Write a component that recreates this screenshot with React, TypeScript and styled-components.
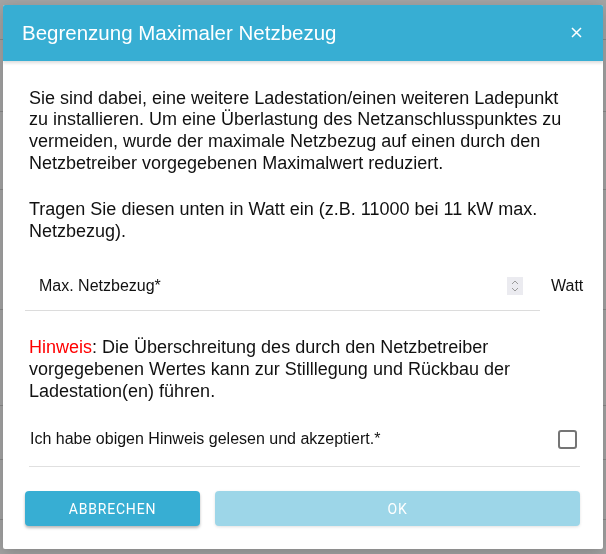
import React from "react";
import styled, { createGlobalStyle } from "styled-components";

const GlobalStyle = createGlobalStyle`
  html, body {
    margin: 0;
    padding: 0;
    height: 100%;
    background: #ffffff;
    font-family: "Liberation Sans", Arial, sans-serif;
  }
`;

const StyledPage = styled("div")`
  height: 554px;
  overflow: hidden;
`;
const StyledPageRow = styled("div")<{ $height: number }>`
  height: ${(p) => p.$height}px;
  border-bottom: 1px solid #d6d6d6;
  box-sizing: border-box;
`;

const StyledBackdrop = styled("div")`
  position: fixed;
  inset: 0;
  background: rgba(0, 0, 0, 0.36);
  display: flex;
  align-items: center;
  justify-content: center;
`;
const StyledDialog = styled("div")`
  width: 600px;
  background: #ffffff;
  display: flex;
  flex-direction: column;
  border-radius: 2px;
  overflow: hidden;
  box-shadow: 0 4px 16px rgba(0, 0, 0, 0.2);
`;
const StyledHeader = styled("div")`
  height: 56px;
  background-color: #37aed3;
  display: flex;
  align-items: center;
  justify-content: space-between;
  padding: 0 21px 0 19px;
  box-shadow: 0 2px 3px rgba(0, 0, 0, 0.14);
  position: relative;
  z-index: 1;
`;
const StyledTitle = styled("div")`
  color: #ffffff;
  font-size: 20.5px;
  font-weight: 400;
`;
const StyledClose = styled("button")`
  border: none;
  background: none;
  padding: 0;
  width: 12px;
  height: 12px;
  display: flex;
  align-items: center;
  justify-content: center;
  cursor: pointer;
`;
const StyledBody = styled("div")`
  padding: 27px 23px 23px 22px;
  display: flex;
  flex-direction: column;
`;
const StyledText = styled("p")<{ $top: number }>`
  margin: ${(p) => p.$top}px 0 0 0;
  padding: 0 6px 0 4px;
  font-size: 18px;
  line-height: 1.2;
  color: #111111;
`;
const StyledRed = styled("span")`
  color: #ff0000;
`;
const StyledInputRow = styled("div")`
  margin-top: 19px;
  display: flex;
  align-items: center;
  gap: 11px;
`;
const StyledField = styled("div")`
  flex: 1;
  height: 50px;
  box-sizing: border-box;
  border-bottom: 1px solid #dcdcdc;
  display: flex;
  align-items: center;
  padding: 0 17px 0 14px;
`;
const StyledFieldLabel = styled("span")`
  flex: 1;
  font-size: 16px;
  color: #111111;
`;
const StyledSpinner = styled("div")`
  width: 16px;
  height: 18px;
  background: #ebebf0;
  display: flex;
  flex-direction: column;
  align-items: center;
  justify-content: center;
  gap: 2px;
`;
const StyledUnit = styled("span")`
  font-size: 16px;
  color: #111111;
  width: 32px;
  margin-right: -3px;
`;
const StyledCheckRow = styled("label")`
  margin-top: 17px;
  height: 40px;
  display: flex;
  align-items: center;
  justify-content: space-between;
  padding: 0 3px 0 5px;
  font-size: 16px;
  color: #111111;
`;
const StyledCheckBox = styled("span")`
  width: 19px;
  height: 19px;
  box-sizing: border-box;
  border: 2px solid #757575;
  border-radius: 3px;
`;
const StyledDivider = styled("div")`
  margin: 7px 0 0 4px;
  height: 1px;
  background: #e0e0e0;
`;
const StyledActions = styled("div")`
  margin-top: 24px;
  display: flex;
  gap: 15px;
`;
const StyledActionButton = styled("button")<{ $disabled?: boolean }>`
  height: 35px;
  border: none;
  border-radius: 4px;
  font-family: Roboto, "Liberation Sans", sans-serif;
  font-size: 14px;
  letter-spacing: 0.8px;
  text-transform: uppercase;
  color: #ffffff;
  background-color: ${(p) => (p.$disabled ? "#9dd6e8" : "#37aed3")};
  box-shadow: ${(p) =>
    p.$disabled
      ? "0 1px 3px rgba(0, 0, 0, 0.12)"
      : "0 2px 3px rgba(0, 0, 0, 0.28)"};
  width: ${(p) => (p.$disabled ? "auto" : "175px")};
  flex: ${(p) => (p.$disabled ? "1" : "none")};
  cursor: ${(p) => (p.$disabled ? "default" : "pointer")};
`;

const pageRows = [40, 72, 78, 120, 96, 54, 60, 60];

const App: React.FC = () => {
  return (
    <>
      <GlobalStyle />
      <StyledPage>
        {pageRows.map((h, index) => (
          <StyledPageRow key={`row-${index}`} $height={h} />
        ))}
      </StyledPage>
      <StyledBackdrop>
        <StyledDialog>
          <StyledHeader>
            <StyledTitle>Begrenzung Maximaler Netzbezug</StyledTitle>
            <StyledClose aria-label="close">
              <svg width="11" height="11" viewBox="0 0 11 11">
                <path
                  d="M1 1 L10 10 M10 1 L1 10"
                  stroke="#ffffff"
                  strokeWidth="1.5"
                />
              </svg>
            </StyledClose>
          </StyledHeader>
          <StyledBody>
            <StyledText $top={0}>
              Sie sind dabei, eine weitere Ladestation/einen weiteren Ladepunkt
              zu installieren. Um eine Überlastung des Netzanschlusspunktes zu
              vermeiden, wurde der maximale Netzbezug auf einen durch den
              Netzbetreiber vorgegebenen Maximalwert reduziert.
            </StyledText>
            <StyledText $top={25}>
              Tragen Sie diesen unten in Watt ein (z.B. 11000 bei 11 kW max.
              Netzbezug).
            </StyledText>
            <StyledInputRow>
              <StyledField>
                <StyledFieldLabel>Max. Netzbezug*</StyledFieldLabel>
                <StyledSpinner>
                  <svg width="8" height="5" viewBox="0 0 8 5">
                    <path d="M1 4 L4 1 L7 4" stroke="#9a9a9a" fill="none" />
                  </svg>
                  <svg width="8" height="5" viewBox="0 0 8 5">
                    <path d="M1 1 L4 4 L7 1" stroke="#9a9a9a" fill="none" />
                  </svg>
                </StyledSpinner>
              </StyledField>
              <StyledUnit>Watt</StyledUnit>
            </StyledInputRow>
            <StyledText $top={26}>
              <StyledRed>Hinweis</StyledRed>: Die Überschreitung des durch den
              Netzbetreiber vorgegebenen Wertes kann zur Stilllegung und
              Rückbau der Ladestation(en) führen.
            </StyledText>
            <StyledCheckRow>
              <span>Ich habe obigen Hinweis gelesen und akzeptiert.*</span>
              <StyledCheckBox />
            </StyledCheckRow>
            <StyledDivider />
            <StyledActions>
              <StyledActionButton>Abbrechen</StyledActionButton>
              <StyledActionButton $disabled>OK</StyledActionButton>
            </StyledActions>
          </StyledBody>
        </StyledDialog>
      </StyledBackdrop>
    </>
  );
};

export default App;
